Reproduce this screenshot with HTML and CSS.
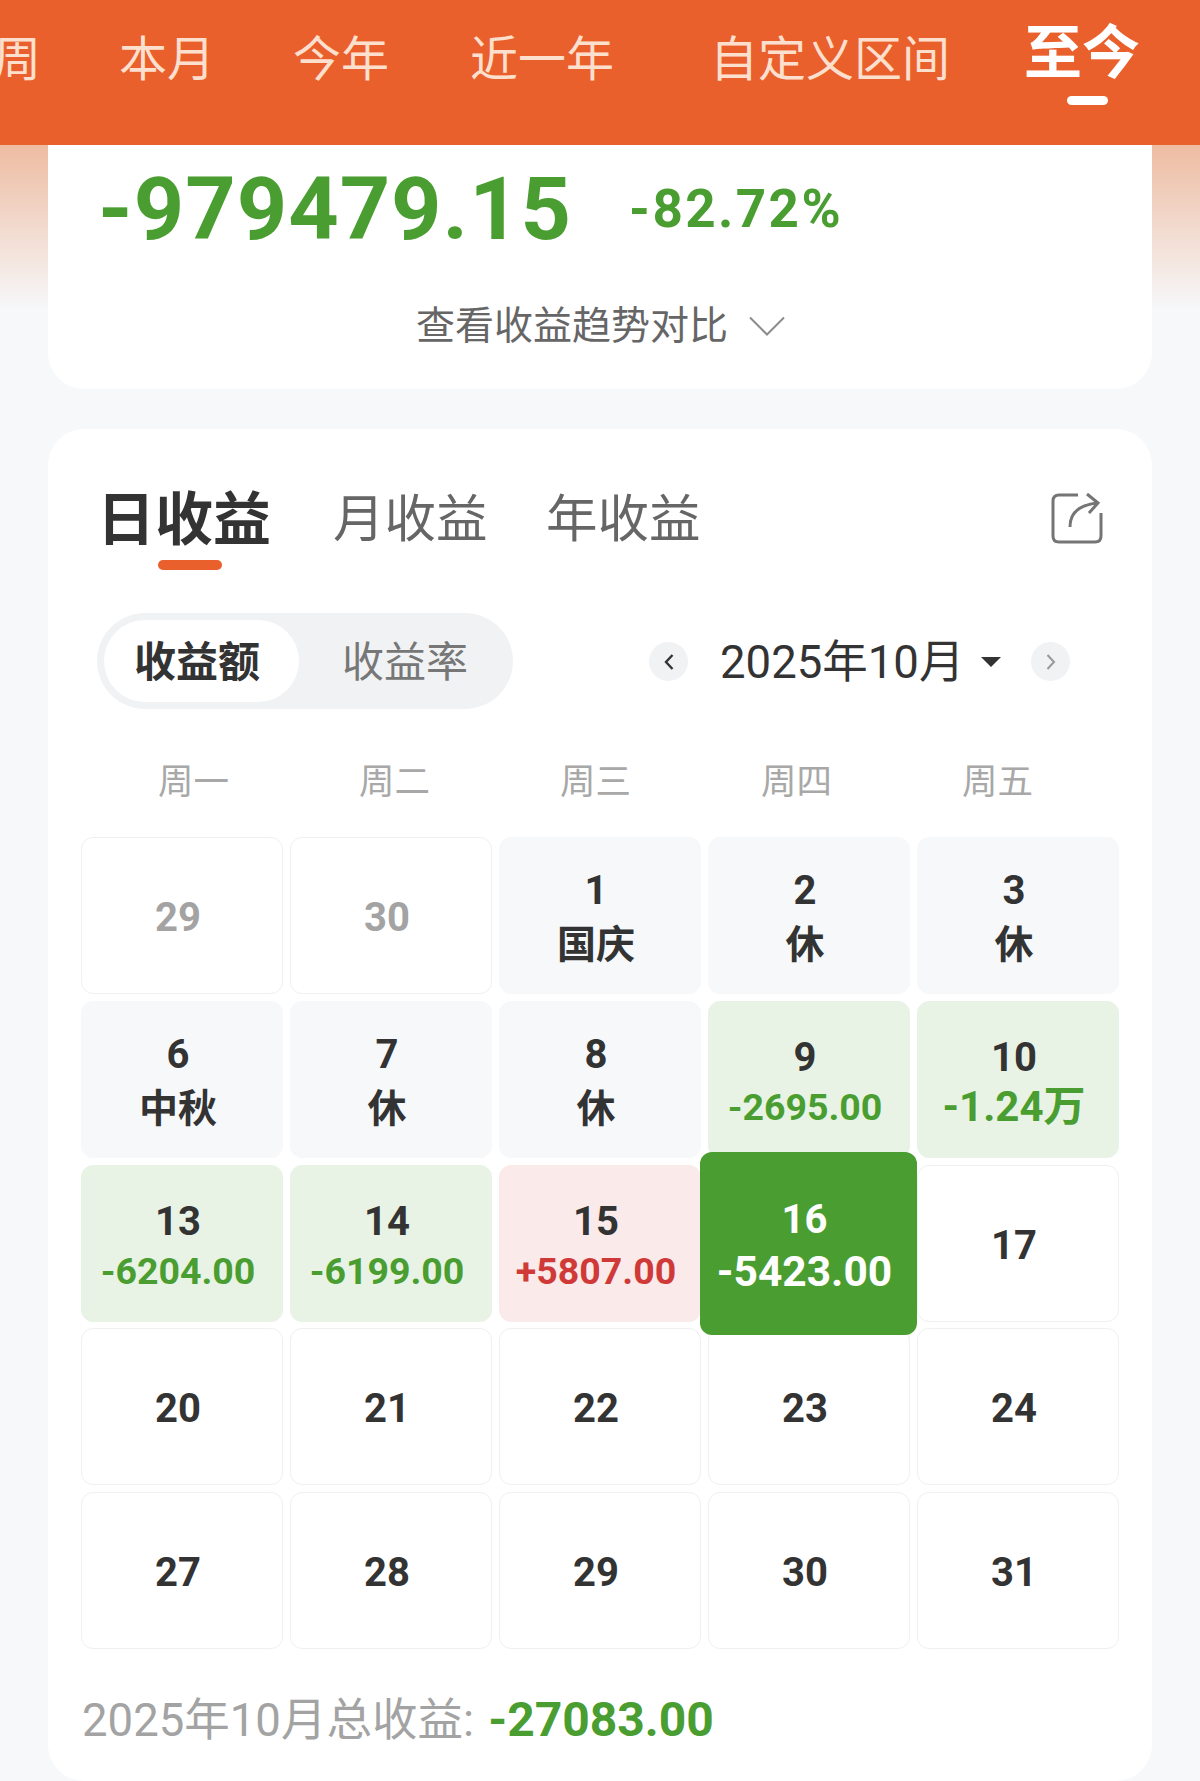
FILE: index.html
```html
<!DOCTYPE html>
<html lang="zh-CN">
<head>
<meta charset="utf-8">
<title>收益日历</title>
<link rel="stylesheet" href="styles.css">
</head>
<body>
<div class="page">
  <header class="period-bar">
    <span class="period">本周</span>
    <span class="period">本月</span>
    <span class="period">今年</span>
    <span class="period period-year">近一年</span>
    <span class="period period-custom">自定义区间</span>
    <span class="period period-active">至今</span>
  </header>
  <main class="content">
    <section class="card summary">
      <div class="totals">
        <span class="total-amount">-979479.15</span>
        <span class="total-rate">-82.72%</span>
      </div>
      <div class="compare">
        <span>查看收益趋势对比</span>
        <svg class="compare-icon" viewBox="0 0 36 20" width="36" height="20"><path d="M1 1.500L18 18.500L35 1.500" fill="none" stroke="#8c8c8c" stroke-width="2"/></svg>
      </div>
    </section>
    <section class="card calendar-card">
      <div class="section-tabs">
        <span class="section-tab section-tab-active">日收益</span>
        <span class="section-tab section-tab-month">月收益</span>
        <span class="section-tab section-tab-year">年收益</span>
        <svg class="share" viewBox="0 0 52 52" width="52" height="52"><path d="M27 3H8Q2 3 2 9V44Q2 50 8 50H44Q50 50 50 44V21" fill="none" stroke="#757575" stroke-width="3"/><path d="M19 35Q19 14 46 11M36 2L47 11L38 21" fill="none" stroke="#757575" stroke-width="3"/></svg>
      </div>
      <div class="controls">
        <div class="toggle">
          <span class="toggle-item toggle-active">收益额</span>
          <span class="toggle-item toggle-rate">收益率</span>
        </div>
        <div class="month-nav">
          <span class="nav-btn"><svg viewBox="0 0 12 18" width="12" height="18"><path d="M9.500 2L3 9L9.500 16" fill="none" stroke="#333" stroke-width="2.400"/></svg></span>
          <span class="month-label">2025年10月</span>
          <span class="month-caret"></span>
          <span class="nav-btn"><svg viewBox="0 0 12 18" width="12" height="18"><path d="M2.500 2L9 9L2.500 16" fill="none" stroke="#999" stroke-width="2"/></svg></span>
        </div>
      </div>
      <div class="weekdays">
        <span>周一</span><span>周二</span><span>周三</span><span>周四</span><span>周五</span>
      </div>
      <div class="days">
        <div class="day day-outside"><b>29</b></div>
        <div class="day day-outside"><b>30</b></div>
        <div class="day day-off"><b>1</b><em>国庆</em></div>
        <div class="day day-off"><b>2</b><em>休</em></div>
        <div class="day day-off"><b>3</b><em>休</em></div>
        <div class="day day-off"><b>6</b><em>中秋</em></div>
        <div class="day day-off"><b>7</b><em>休</em></div>
        <div class="day day-off"><b>8</b><em>休</em></div>
        <div class="day day-loss"><b>9</b><i>-2695.00</i></div>
        <div class="day day-loss"><b>10</b><i class="wan">-1.24万</i></div>
        <div class="day day-loss"><b>13</b><i>-6204.00</i></div>
        <div class="day day-loss"><b>14</b><i>-6199.00</i></div>
        <div class="day day-gain"><b>15</b><i>+5807.00</i></div>
        <div class="day day-selected"><b>16</b><i>-5423.00</i></div>
        <div class="day"><b>17</b></div>
        <div class="day"><b>20</b></div>
        <div class="day"><b>21</b></div>
        <div class="day"><b>22</b></div>
        <div class="day"><b>23</b></div>
        <div class="day"><b>24</b></div>
        <div class="day"><b>27</b></div>
        <div class="day"><b>28</b></div>
        <div class="day"><b>29</b></div>
        <div class="day"><b>30</b></div>
        <div class="day"><b>31</b></div>
      </div>
      <p class="month-total">2025年10月总收益: <strong>-27083.00</strong></p>
    </section>
  </main>
</div>
</body>
</html>
```
FILE: styles.css
```css
* { box-sizing: border-box; }
html, body { margin: 0; padding: 0; }
body {
  width: 1200px;
  height: 1781px;
  overflow: hidden;
  background: #f6f8fa;
  font-family: Roboto, "Noto Sans CJK SC", sans-serif;
  color: #333;
}
.page { width: 1200px; height: 1781px; overflow: hidden; }

.period-bar {
  height: 145px;
  background: #ea602c;
  display: flex;
  align-items: flex-start;
  margin-left: -55px;
  gap: 78px;
  white-space: nowrap;
}
.period {
  font-size: 48px;
  line-height: 60px;
  margin-top: 30px;
  color: #fddfce;
}
.period-year { margin-left: 3px; }
.period-custom { margin-left: 18px; }
.period-active {
  position: relative;
  margin-top: 22px;
  margin-left: -4px;
  font-size: 58px;
  line-height: 62px;
  font-weight: 700;
  color: #fff;
}
.period-active::after {
  content: "";
  position: absolute;
  left: 43px;
  top: 74px;
  width: 41px;
  height: 9px;
  border-radius: 5px;
  background: #fff;
}

.content {
  padding: 0 48px;
  background: linear-gradient(#eebca2 0, #f6f8fa 165px) no-repeat;
  background-size: 100% 170px;
}
.card { background: #fff; border-radius: 36px; }
.summary {
  height: 244px;
  border-radius: 0 0 36px 36px;
  padding: 14px 0 0 50px;
}
.totals { display: flex; align-items: center; height: 100px; }
.total-amount { font-size: 88px; line-height: 100px; font-weight: 700; letter-spacing: 1px; color: #4a9e31; }
.total-rate { margin-left: 57px; font-size: 53px; font-weight: 700; letter-spacing: 2.400px; color: #4a9e31; }
.compare {
  display: flex;
  align-items: center;
  margin: 42px 0 0 318px;
  font-size: 39px;
  line-height: 50px;
  color: #666;
}
.compare-icon { margin-left: 21px; }

.calendar-card {
  margin-top: 40px;
  height: 1352px;
  padding: 60px 33px 0;
}
.section-tabs { display: flex; align-items: center; height: 62px; position: relative; }
.section-tab { font-size: 51.500px; line-height: 62px; color: #666; }
.section-tab-active {
  position: relative;
  margin-left: 16px;
  font-size: 58px;
  font-weight: 700;
  color: #333;
}
.section-tab-active::after {
  content: "";
  position: absolute;
  left: 61px;
  top: 71px;
  width: 64px;
  height: 10px;
  border-radius: 5px;
  background: #ea602c;
}
.section-tab-month { margin-left: 62px; }
.section-tab-year { margin-left: 58.500px; }
.share { margin-left: auto; margin-right: 16px; margin-bottom: 5px; }

.controls {
  display: flex;
  align-items: center;
  margin: 62px 0 0 16px;
  height: 96px;
}
.toggle {
  display: flex;
  align-items: center;
  width: 416px;
  height: 96px;
  padding: 0 7px;
  border-radius: 48px;
  background: #f1f2f4;
}
.toggle-item {
  width: 195px;
  height: 82px;
  line-height: 86px;
  text-align: center;
  font-size: 42px;
  color: #777;
}
.toggle-active {
  padding-right: 9px;
  border-radius: 41px;
  background: #fff;
  font-weight: 700;
  color: #333;
}
.toggle-rate { padding-left: 17px; }
.month-nav { display: flex; align-items: center; margin: 1px 0 0 136px; }
.nav-btn {
  display: flex;
  align-items: center;
  justify-content: center;
  width: 39px;
  height: 39px;
  border-radius: 50%;
  background: #f1f2f4;
}
.month-label { margin-left: 32px; padding-top: 3px; font-size: 45.500px; line-height: 60px; color: #333; }
.month-caret {
  width: 0;
  height: 0;
  margin: 0 30px 0 17px;
  border-left: 10.500px solid transparent;
  border-right: 10.500px solid transparent;
  border-top: 10px solid #333;
}

.weekdays {
  display: grid;
  grid-template-columns: repeat(5, 201px);
  margin: 48px 0 0 12px;
  text-align: center;
  font-size: 35.500px;
  line-height: 50px;
  color: #a8a8a8;
}

.days {
  display: grid;
  grid-template-columns: repeat(5, 202px);
  grid-auto-rows: 157px;
  column-gap: 7px;
  row-gap: 6.800px;
  margin-top: 30px;
}
.day {
  display: flex;
  flex-direction: column;
  align-items: center;
  justify-content: center;
  padding: 5px 8px 0 0;
  border: 1px solid #f0f0f0;
  border-radius: 12px;
  background: #fff;
}
.day b { font-size: 40px; line-height: 54px; font-weight: 700; }
.day em { font-style: normal; font-weight: 700; font-size: 39px; line-height: 54px; }
.day i { margin-top: -3px; font-style: normal; font-weight: 700; font-size: 37.500px; line-height: 50px; }
.day i.wan { font-size: 42px; }
.day-outside b { color: #a3a3a3; }
.day-off { border-color: #f6f8fa; background: #f6f8fa; }
.day-loss { border-color: #e8f3e5; background: #e8f3e5; }
.day-loss i { color: #4a9e31; }
.day-gain { border-color: #faeaea; background: #faeaea; }
.day-gain i { color: #cf3a38; }
.day-selected {
  z-index: 1;
  margin: -13px -7px -13px -8px;
  padding: 3px 8px 0 0;
  border: 0;
  background: #4a9e31;
  color: #fff;
}
.day-selected i { margin-top: 0; font-size: 42.500px; color: #fff; }

.month-total {
  margin: 41px 0 0 1px;
  font-size: 45.500px;
  line-height: 60px;
  color: #a3a3a3;
}
.month-total strong { margin-left: 3px; font-size: 48px; font-weight: 700; color: #4a9e31; }
```
